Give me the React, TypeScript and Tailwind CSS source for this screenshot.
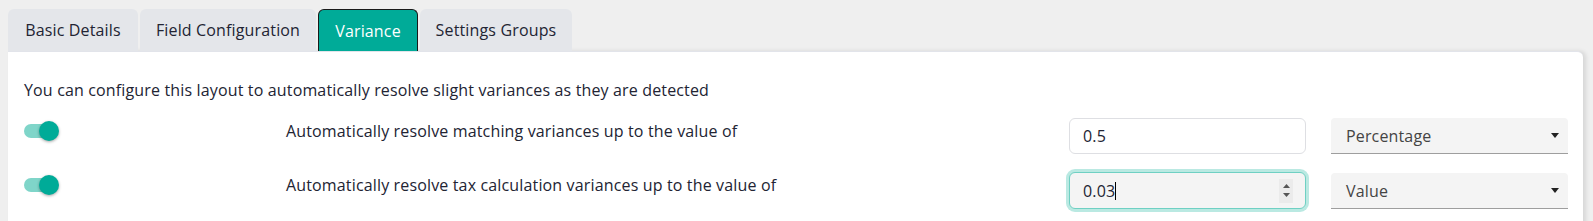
import React from "react";

const font = { fontFamily: "'Open Sans', 'Noto Sans', sans-serif" };

function Toggle() {
  return (
    <div className="relative h-[26px] w-[36px] flex items-center">
      <div className="h-[14px] w-[30px] rounded-full bg-[#7fd5c9]" />
      <div className="absolute left-[15px] top-[3px] h-[20px] w-[20px] rounded-full bg-[#00ab98] shadow-[0_1px_3px_rgba(0,0,0,0.35)]" />
    </div>
  );
}

function Arrow() {
  return (
    <svg width="8" height="5" viewBox="0 0 8 5">
      <path d="M0 0 L8 0 L4 5 Z" fill="#222" />
    </svg>
  );
}

const tabs = [
  { t: "Basic Details", w: "w-[130px]" },
  { t: "Field Configuration", w: "w-[176px]" },
  { t: "Variance", w: "w-[100px]" },
  { t: "Settings Groups", w: "w-[152px]" },
];

export default function App() {
  return (
    <div className="w-[1593px] h-[221px] bg-[#efefef] overflow-hidden text-[#222433] pt-[9px] pl-[8px] tracking-[0.15px]" style={font}>
      <div className="flex gap-[2px] h-[42px]">
        {tabs.map(({ t, w }) =>
          t === "Variance" ? (
            <div
              key={t}
              className={`${w} h-[42px] flex items-center justify-center rounded-t-[6px] bg-[#00ab98] border border-[#1a1a1a] border-b-0 text-white text-[16px]`}
            >
              {t}
            </div>
          ) : (
            <div
              key={t}
              className={`${w} h-[42px] flex items-center justify-center rounded-t-[6px] bg-[#e4e6ea] text-[16px]`}
            >
              {t}
            </div>
          )
        )}
      </div>
      <div className="w-[1575px] h-[200px] bg-white rounded-tr-[6px] border-t border-[#e2e4ea] shadow-[3px_0_4px_rgba(0,0,0,0.10)] pl-[16px] pt-[26px]">
        <div className="text-[16px] leading-[24px]">
          You can configure this layout to automatically resolve slight variances as they are detected
        </div>
        <div className="flex items-start mt-[16px] h-[36px]">
          <div className="w-[262px]"><Toggle /></div>
          <div className="w-[783px] text-[16px] leading-[24px] mt-[1px]">Automatically resolve matching variances up to the value of</div>
          <div className="w-[237px] h-[36px] border border-[#dedfe3] rounded-[6px] flex items-center px-[13px] text-[16px]">0.5</div>
          <div className="ml-[25px] w-[237px] h-[36px] bg-[#f4f4f4] rounded-t-[4px] border-b border-[#9e9e9e] flex items-center justify-between pl-[15px] pr-[9px] text-[16px] text-[#444]">
            <span>Percentage</span>
            <Arrow />
          </div>
        </div>
        <div className="flex items-start mt-[18px] h-[37px]">
          <div className="w-[262px]"><Toggle /></div>
          <div className="w-[783px] text-[16px] leading-[24px] mt-[1px]">Automatically resolve tax calculation variances up to the value of</div>
          <div className="w-[237px] h-[37px] rounded-[6px] border border-[#6fd0c3] bg-[#f4f4f4] shadow-[0_0_0_3px_#bae9e2] flex items-center justify-between pl-[13px] pr-[12px] text-[16px]">
            <span className="flex items-center">0.03<span className="inline-block w-[1px] h-[18px] bg-black" /></span>
            <div className="flex flex-col items-center justify-center gap-[5px] w-[14px] h-[24px] bg-[#ebebeb]">
              <svg width="7" height="4" viewBox="0 0 7 4"><path d="M0 4 L3.5 0 L7 4 Z" fill="#555" /></svg>
              <svg width="7" height="4" viewBox="0 0 7 4"><path d="M0 0 L3.5 4 L7 0 Z" fill="#555" /></svg>
            </div>
          </div>
          <div className="ml-[25px] w-[237px] h-[36px] mt-[1px] bg-[#f4f4f4] rounded-t-[4px] border-b border-[#9e9e9e] flex items-center justify-between pl-[15px] pr-[9px] text-[16px] text-[#444]">
            <span>Value</span>
            <Arrow />
          </div>
        </div>
      </div>
    </div>
  );
}
